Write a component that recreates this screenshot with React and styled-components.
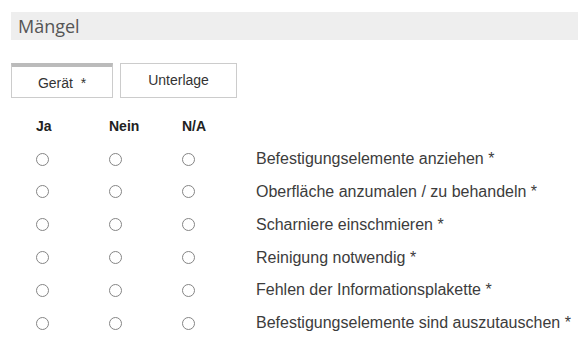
import React from "react";
import styled, { createGlobalStyle } from "styled-components";

const Global = createGlobalStyle`
  html, body { margin: 0; padding: 0; background: #fff; }
  body { font-family: "Liberation Sans", Arial, sans-serif; color: #333; }
`;

const Page = styled.div`
  padding: 12px 0 0 11px;
`;

const SectionHeader = styled.div`
  height: 28px;
  background: #eeeeee;
  padding-left: 7px;
  display: flex;
  align-items: center;
  font-family: "Open Sans", "Noto Sans", sans-serif;
  font-size: 18px;
  color: #555;
`;

const Tabs = styled.div`
  display: flex;
  gap: 7px;
  margin-top: 23px;
`;

const Tab = styled.button`
  box-sizing: border-box;
  height: 35px;
  width: ${(p) => p.$w}px;
  background: #fff;
  border: 1px solid #cccccc;
  border-top: ${(p) => (p.$active ? "4px solid #bbbbbb" : "1px solid #cccccc")};
  font-family: "Liberation Sans", Arial, sans-serif;
  font-size: 14px;
  color: #333;
  padding: ${(p) => (p.$active ? "2px 0 0" : "0 0 2px")};
  display: flex;
  align-items: center;
  justify-content: center;
  white-space: pre;
`;

const Grid = styled.div`
  display: grid;
  grid-template-columns: 73px 73px 74px auto;
  grid-auto-rows: 32.8px;
  margin: 12px 0 0 25px;
  align-items: center;
`;

const ColHead = styled.div`
  font-weight: bold;
  font-size: 14px;
  color: #222;
`;

const Radio = styled.input.attrs({ type: "radio" })`
  appearance: none;
  margin: 0;
  width: 13px;
  height: 13px;
  box-sizing: border-box;
  border: 1px solid #858585;
  border-radius: 50%;
  background: #fff;
  display: block;
`;

const Label = styled.div`
  font-size: 16px;
  color: #3c3c3c;
  white-space: nowrap;
`;

const items = [
  "Befestigungselemente anziehen *",
  "Oberfläche anzumalen / zu behandeln *",
  "Scharniere einschmieren *",
  "Reinigung notwendig *",
  "Fehlen der Informationsplakette *",
  "Befestigungselemente sind auszutauschen *",
];

export default function App() {
  return (
    <>
      <Global />
      <Page>
        <SectionHeader>Mängel</SectionHeader>
        <Tabs>
          <Tab $active $w={102}>{"Gerät  *"}</Tab>
          <Tab $w={117}>Unterlage</Tab>
        </Tabs>
        <Grid>
          <ColHead>Ja</ColHead>
          <ColHead>Nein</ColHead>
          <ColHead>N/A</ColHead>
          <div />
          {items.map((t, i) => (
            <React.Fragment key={i}>
              <div><Radio name={`r${i}`} /></div>
              <div><Radio name={`r${i}`} /></div>
              <div><Radio name={`r${i}`} /></div>
              <Label>{t}</Label>
            </React.Fragment>
          ))}
        </Grid>
      </Page>
    </>
  );
}
